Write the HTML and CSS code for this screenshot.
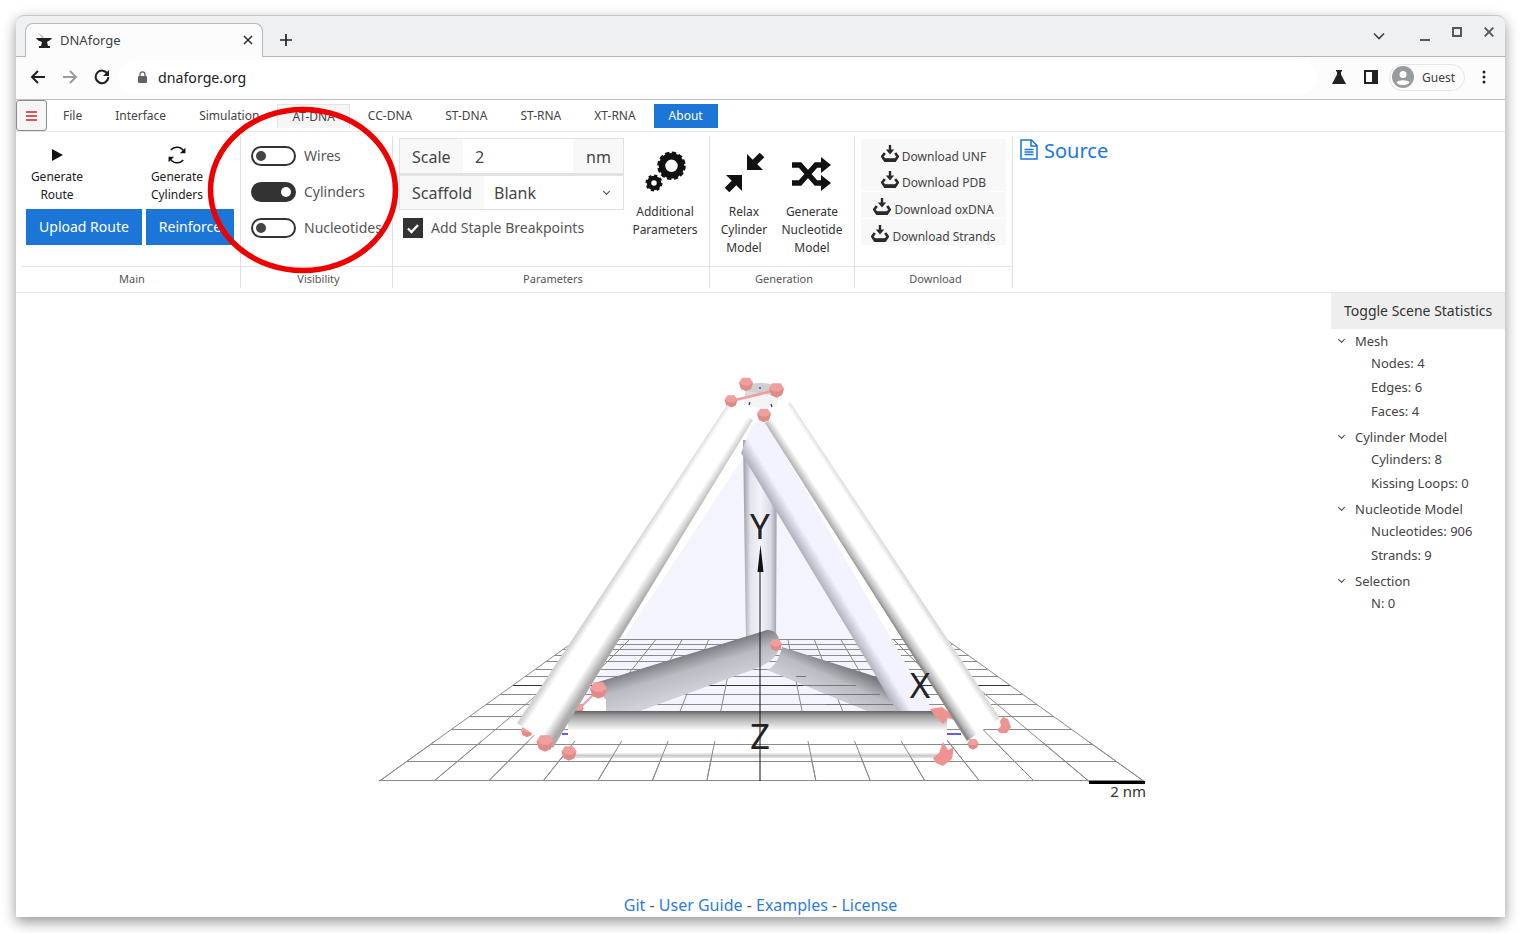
FILE: index.html
```html
<!DOCTYPE html>
<html lang="en">
<head>
<meta charset="utf-8">
<title>DNAforge</title>
<link rel="stylesheet" href="styles.css">
</head>
<body>
<svg class="sprites" width="0" height="0" aria-hidden="true">
  <defs>
    <symbol id="dl" viewBox="0 0 18 18">
      <path d="M7.800 0h2.400v4.500h3L9 9.500 4.800 4.500h3z" fill="#2a2a2a"/>
      <path d="M3.800 8 1.300 11.500 4 15.700h10L16.700 11.500 14.200 8" fill="none" stroke="#2a2a2a" stroke-width="2.600"/>
      <path d="M3 14.500h12" stroke="#2a2a2a" stroke-width="2.600"/>
    </symbol>
  </defs>
</svg>
<div class="window">
  <div class="tabstrip">
    <div class="tab">
      <svg class="favicon" viewBox="0 0 16 16" width="16" height="16">
        <path d="M1 0l7 5-1 2z" fill="#c4c7cb"/>
        <path d="M0 6h16c-2 3-4 3-5 4l1 4h2v2H3v-2h2l1-4C3 9 1 8 0 6z" fill="#222"/>
      </svg>
      <span class="tab-title">DNAforge</span>
      <svg class="tab-x" viewBox="0 0 10 10" width="10" height="10"><path d="M1 1l8 8M9 1l-8 8" stroke="#333" stroke-width="1.600"/></svg>
    </div>
    <svg class="newtab" viewBox="0 0 12 12" width="12" height="12"><path d="M6 0v12M0 6h12" stroke="#222" stroke-width="1.700"/></svg>
    <div class="winctl">
      <svg viewBox="0 0 12 8" width="12" height="8"><path d="M1 1.500l5 5 5-5" fill="none" stroke="#3c4043" stroke-width="1.600"/></svg>
      <svg class="ctl-min" viewBox="0 0 10 2" width="10" height="2"><path d="M0 1h10" stroke="#55585d" stroke-width="2"/></svg>
      <svg class="ctl-max" viewBox="0 0 10 10" width="10" height="10"><rect x="1" y="1" width="8" height="8" fill="none" stroke="#55585d" stroke-width="2"/></svg>
      <svg class="ctl-x" viewBox="0 0 10 10" width="10" height="10"><path d="M.7.7l8.600 8.600M9.300.7.7 9.300" stroke="#55585d" stroke-width="1.900"/></svg>
    </div>
  </div>
  <div class="toolbar">
    <svg class="nav" viewBox="0 0 16 16" width="16" height="16"><path d="M15 8H2M8 2 2 8l6 6" fill="none" stroke="#202124" stroke-width="2"/></svg>
    <svg class="nav" viewBox="0 0 16 16" width="16" height="16"><path d="M1 8h13M8 2l6 6-6 6" fill="none" stroke="#9a9b9d" stroke-width="2"/></svg>
    <svg class="nav" viewBox="0 0 16 16" width="16" height="16"><path d="M13.600 5A6.300 6.300 0 1 0 14.300 8" fill="none" stroke="#202124" stroke-width="2"/><path d="M15 1v6H9z" fill="#202124"/></svg>
    <div class="omnibox">
      <svg viewBox="0 0 9 12" width="9" height="12"><path d="M2 5V3.300a2.500 2.500 0 0 1 5 0V5" fill="none" stroke="#5f6368" stroke-width="1.300"/><rect y="5" width="9" height="7" rx="1" fill="#5f6368"/></svg>
      <span class="url">dnaforge.org</span>
    </div>
    <svg class="flask" viewBox="0 0 14 14" width="14" height="14"><path d="M4 0h6v1.500H9v3L14 14H0L5 4.500v-3H4z" fill="#202124"/></svg>
    <svg class="sidepanel" viewBox="0 0 14 14" width="14" height="14"><path d="M0 0h14v14H0zM2 2v10h6V2z" fill="#202124" fill-rule="evenodd"/></svg>
    <div class="profile">
      <svg viewBox="0 0 22 22" width="22" height="22"><circle cx="11" cy="11" r="11" fill="#9a9b9d"/><circle cx="11" cy="8.500" r="3.500" fill="#fff"/><path d="M4.500 16.500c1.500-3 11.500-3 13 0-3 3.500-10 3.500-13 0z" fill="#fff"/></svg>
      <span>Guest</span>
    </div>
    <svg class="kebab" viewBox="0 0 4 14" width="4" height="14"><circle cx="2" cy="2" r="1.500" fill="#202124"/><circle cx="2" cy="7" r="1.500" fill="#202124"/><circle cx="2" cy="12" r="1.500" fill="#202124"/></svg>
  </div>
  <nav class="menubar">
    <button class="burger" type="button" aria-label="Menu"><span></span><span></span><span></span></button>
    <span class="menu-item">File</span>
    <span class="menu-item">Interface</span>
    <span class="menu-item">Simulation</span>
    <span class="menu-item is-active">AT-DNA</span>
    <span class="menu-item">CC-DNA</span>
    <span class="menu-item">ST-DNA</span>
    <span class="menu-item">ST-RNA</span>
    <span class="menu-item">XT-RNA</span>
    <span class="menu-item is-about">About</span>
  </nav>
  <section class="ribbon">
    <div class="group group-main">
      <div class="group-body main-body">
        <div class="small-tool">
          <svg viewBox="0 0 18 18" width="18" height="18"><path d="M4 3l11 6-11 6z" fill="#111"/></svg>
          <span>Generate Route</span>
        </div>
        <div class="small-tool">
          <svg viewBox="1 1 16 16" width="18" height="18"><path d="M15.400 6.500A7 7 0 0 0 3.500 4.600M2.600 11.500a7 7 0 0 0 11.900 1.900" fill="none" stroke="#111" stroke-width="1.300"/><path d="M16.500 2.500v5H11.500zM1.500 15.500v-5H6.500z" fill="#111"/></svg>
          <span>Generate Cylinders</span>
        </div>
        <button class="primary" type="button">Upload Route</button>
        <button class="primary" type="button">Reinforce</button>
      </div>
      <div class="group-label">Main</div>
    </div>
    <div class="group group-vis">
      <div class="group-body vis-body">
        <div class="switch-row"><span class="switch"></span><span class="switch-text">Wires</span></div>
        <div class="switch-row"><span class="switch is-on"></span><span class="switch-text">Cylinders</span></div>
        <div class="switch-row"><span class="switch"></span><span class="switch-text">Nucleotides</span></div>
      </div>
      <div class="group-label">Visibility</div>
    </div>
    <div class="group group-params">
      <div class="group-body params-body">
        <div class="params-form">
          <div class="field">
            <span class="addon addon-scale">Scale</span>
            <span class="field-value">2</span>
            <span class="addon addon-unit">nm</span>
          </div>
          <div class="field field-second">
            <span class="addon addon-scaffold">Scaffold</span>
            <span class="field-value">Blank</span>
            <span class="chev field-chev"></span>
          </div>
          <div class="check-row">
            <svg viewBox="0 0 20 20" width="20" height="20"><rect width="20" height="20" fill="#333"/><path d="M5 10.500l3.500 3.500L15 7" fill="none" stroke="#fff" stroke-width="2.400"/></svg>
            <span class="check-text">Add Staple Breakpoints</span>
          </div>
        </div>
        <div class="tool tool-add">
          <svg viewBox="641 148 48 48" width="48" height="48">
            <circle cx="671.500" cy="165.800" r="9.500" fill="none" stroke="#111" stroke-width="6.500"/>
            <circle cx="671.500" cy="165.800" r="12.500" fill="none" stroke="#111" stroke-width="3.500" stroke-dasharray="4.200 2.340"/>
            <circle cx="654" cy="183" r="5" fill="none" stroke="#111" stroke-width="4.500"/>
            <circle cx="654" cy="183" r="7.300" fill="none" stroke="#111" stroke-width="2.500" stroke-dasharray="3 2.730"/>
          </svg>
          <span>Additional Parameters</span>
        </div>
      </div>
      <div class="group-label">Parameters</div>
    </div>
    <div class="group group-gen">
      <div class="group-body gen-body">
        <div class="tool">
          <svg viewBox="720 148 48 48" width="48" height="48">
            <path d="M747 154v16h16z" fill="#111"/><path d="M752 165l10-10" stroke="#111" stroke-width="6.500"/>
            <path d="M742 175h-16l16 16z" fill="#111"/><path d="M736 181l-9 9" stroke="#111" stroke-width="6.500"/>
          </svg>
          <span>Relax Cylinder Model</span>
        </div>
        <div class="tool">
          <svg viewBox="788 148 48 48" width="48" height="48">
            <path d="M792 165h8l16 18h8M792 183h8l16-18h8" fill="none" stroke="#111" stroke-width="5.500"/>
            <path d="M821 157l10 8-10 8zM821 175l10 8-10 8z" fill="#111"/>
          </svg>
          <span>Generate Nucleotide Model</span>
        </div>
      </div>
      <div class="group-label">Generation</div>
    </div>
    <div class="group group-dl">
      <div class="group-body dl-body">
        <div class="dl-block">
          <div class="dl-item"><svg width="18" height="18"><use href="#dl"/></svg><span>Download UNF</span></div>
          <div class="dl-item"><svg width="18" height="18"><use href="#dl"/></svg><span>Download PDB</span></div>
        </div>
        <div class="dl-block">
          <div class="dl-item"><svg width="18" height="18"><use href="#dl"/></svg><span>Download oxDNA</span></div>
        </div>
        <div class="dl-block">
          <div class="dl-item"><svg width="18" height="18"><use href="#dl"/></svg><span>Download Strands</span></div>
        </div>
      </div>
      <div class="group-label">Download</div>
    </div>
    <a class="source" href="#">
      <svg viewBox="0 0 18 21" width="18" height="21"><path d="M1 1h10.500L17 6.500V20H1zM11 1.500V7h5.500" fill="none" stroke="#1c76d8" stroke-width="1.500"/><path d="M4.500 10.500h9M4.500 13h9M4.500 15.500h9" stroke="#1c76d8" stroke-width="1.300"/></svg>
      <span>Source</span>
    </a>
  </section>
  <main class="stage">
    <svg class="scene" viewBox="16 293 1489 624" width="1489" height="624">
      <defs>
        <linearGradient id="gFL" gradientUnits="userSpaceOnUse" x1="622" y1="564" x2="653" y2="584"><stop offset="0" stop-color="#d2d2d2"/><stop offset=".18" stop-color="#fff"/><stop offset=".7" stop-color="#fff"/><stop offset="1" stop-color="#ababab"/></linearGradient>
        <linearGradient id="gFR" gradientUnits="userSpaceOnUse" x1="865" y1="581" x2="895" y2="561.400"><stop offset="0" stop-color="#8a8a8a"/><stop offset=".07" stop-color="#b4b4b4"/><stop offset=".3" stop-color="#fff"/><stop offset=".86" stop-color="#fff"/><stop offset="1" stop-color="#dcdcdc"/></linearGradient>
        <linearGradient id="gBR" gradientUnits="userSpaceOnUse" x1="820" y1="583.600" x2="847" y2="567.400"><stop offset="0" stop-color="#b0b0be"/><stop offset=".42" stop-color="#f3f3ff"/><stop offset="1" stop-color="#f3f3ff"/></linearGradient>
        <linearGradient id="gV" gradientUnits="userSpaceOnUse" x1="744" y1="0" x2="777" y2="0"><stop offset="0" stop-color="#a4a4b0"/><stop offset=".2" stop-color="#e4e4ee"/><stop offset=".5" stop-color="#f3f3fc"/><stop offset=".8" stop-color="#dcdce6"/><stop offset="1" stop-color="#9c9ca8"/></linearGradient>
        <linearGradient id="gGL" gradientUnits="userSpaceOnUse" x1="680" y1="655" x2="691" y2="692"><stop offset="0" stop-color="#77777d"/><stop offset=".45" stop-color="#bbbbc3"/><stop offset="1" stop-color="#cfd0d8"/></linearGradient>
        <linearGradient id="gGR" gradientUnits="userSpaceOnUse" x1="833" y1="660" x2="818" y2="694"><stop offset="0" stop-color="#77777d"/><stop offset=".45" stop-color="#bbbbc3"/><stop offset="1" stop-color="#cfd0d8"/></linearGradient>
        <linearGradient id="gH" gradientUnits="userSpaceOnUse" x1="0" y1="711" x2="0" y2="758"><stop offset="0" stop-color="#626264"/><stop offset=".1" stop-color="#a0a0a0"/><stop offset=".42" stop-color="#fff"/><stop offset=".88" stop-color="#fff"/><stop offset=".95" stop-color="#c8c8c8"/><stop offset="1" stop-color="#e6e6e6"/></linearGradient>
        <clipPath id="frontClip"><rect x="370" y="741" width="800" height="45"/></clipPath>
        <g id="floor" fill="none" stroke="#8a8a8a" stroke-width="1">
          <path d="M379.500 780.500H1143.500M406.800 761.500H1116.200M430.500 744.500H1092.500M451 729.500H1072M469.300 716.500H1053.700M485.600 704.500H1037.400M500.100 694.500H1022.900M525 676.500H998M535.600 669.500H987.400M545.500 661.500H977.500M554.500 655.500H968.500M562.800 649.500H960.200M570.300 644.500H952.700M577.500 639.500H945.500"/>
          <path d="M513 685.500H1010" stroke="#333"/>
          <path d="M379.500 781 577.500 639M434 781 603.800 639M488.600 781 630 639M543.100 781 656.300 639M597.700 781 682.600 639M652.200 781 708.900 639M706.800 781 735.200 639M815.900 781 787.800 639M870.400 781 814.100 639M925 781 840.400 639M979.500 781 866.700 639M1034 781 893 639M1088.600 781 919.200 639M1143.500 781 945.500 639"/>
        </g>
        <g id="node">
          <polygon points="-1,-.2 -.55,-.9 .55,-.9 1,-.2 .7,.7 0,1 -.7,.7" fill="#f19e9e"/>
          <polygon points="-1,-.2 -.7,.7 0,1 .7,.7 1,-.2 .4,.2 -.4,.2" fill="#e08a8a"/>
        </g>
      </defs>

      <polygon points="755,440 575,712 940,712" fill="#f3f4fe"/>
      <use href="#floor"/>
      <polygon points="743,440 777,440 776,640 746,640" fill="url(#gV)"/>
      <path d="M595 683 767 630Q780 630 780 647Q776 660 760 667L640 711H606V700Z" fill="url(#gGL)"/>
      <path d="M782 647 877 677 897 711H867L767 670Q778 665 782 647Z" fill="url(#gGR)"/>
      <path d="M803 685.500H856M796 676.500H806M815 694.500H880M825 704.500H898" stroke="#777" fill="none"/>
      <polygon points="741,453 752,425 765,420 933,711 897,711" fill="url(#gBR)"/>
      <polygon points="593,694 606,700 606,711 578,711" fill="#fff"/>
      <path d="M598 690 576 712" stroke="#f0a0a0" stroke-width="2"/>
      <use href="#node" transform="translate(598.500 690) scale(8.500)"/>
      <use href="#node" transform="translate(578 709) scale(5.500)"/>
      <use href="#node" transform="translate(776 645) scale(6)"/>

      <rect x="745" y="387" width="33" height="15" fill="#dcdcdc"/>
      <ellipse cx="761" cy="388" rx="16.500" ry="5" fill="#cfcfcf"/>
      <ellipse cx="761" cy="401" rx="17" ry="7" fill="#f4f4f4"/>
      <path d="M731 401 777 390" stroke="#f09d9d" stroke-width="2.500"/>
      <path d="M760 389v-2M749 405l1-3M771 404l1 3" stroke="#2222dd" stroke-width="1.200"/>
      <use href="#node" transform="translate(746 384) scale(7)"/>
      <use href="#node" transform="translate(776.500 390) scale(7.500)"/>
      <use href="#node" transform="translate(731 401) scale(6.500)"/>

      <rect x="568" y="711" width="379" height="47" fill="url(#gH)"/>
      <use href="#floor" clip-path="url(#frontClip)"/>
      <path d="M562 734h6M947 734h14" stroke="#2b2bee" stroke-width="1.300"/>
      <path d="M930 709l12-2 8 6 7 8-9-3-5 6-8-8z" fill="#ee9292"/>
      <path d="M933 758l6-5 4-11 5 8 6-3-2 12-9 7-7-3z" fill="#ee9292"/>
      <use href="#node" transform="translate(569 753) scale(7.500)"/>
      <use href="#node" transform="translate(527 731) scale(6)"/>
      <use href="#node" transform="translate(973 744) scale(5.500)"/>
      <path d="M1003 717l5 2 3 8-4 6-7 0-3-3 4-4-1-5z" fill="#ee9292"/>

      <polygon points="765,423 790,402 1000,718 967,741" fill="url(#gFR)"/>
      <polygon points="727,405 753,420 553,748 517,723" fill="url(#gFL)"/>
      <use href="#node" transform="translate(545 743) scale(8.500)"/>
      <use href="#node" transform="translate(764 415) scale(7)"/>

      <path d="M760 570V781" stroke="#111" stroke-width="1"/>
      <path d="M760.500 545 757.500 572H763.500Z" fill="#111"/>
      <text class="axis" x="760" y="539">Y</text>
      <text class="axis" x="920" y="698">X</text>
      <text class="axis" x="760" y="749">Z</text>
      <path d="M1089 782.500H1145" stroke="#000" stroke-width="3"/>
      <text class="scale-text" x="1146" y="797">2 nm</text>
    </svg>
    <aside class="stats">
      <div class="stats-toggle">Toggle Scene Statistics</div>
      <ul class="tree">
        <li class="tree-head"><span class="chev"></span>Mesh</li>
        <li class="tree-leaf first">Nodes: 4</li>
        <li class="tree-leaf">Edges: 6</li>
        <li class="tree-leaf">Faces: 4</li>
        <li class="tree-head"><span class="chev"></span>Cylinder Model</li>
        <li class="tree-leaf first">Cylinders: 8</li>
        <li class="tree-leaf">Kissing Loops: 0</li>
        <li class="tree-head"><span class="chev"></span>Nucleotide Model</li>
        <li class="tree-leaf first">Nucleotides: 906</li>
        <li class="tree-leaf">Strands: 9</li>
        <li class="tree-head"><span class="chev"></span>Selection</li>
        <li class="tree-leaf first">N: 0</li>
      </ul>
    </aside>
    <footer class="links"><a href="#">Git</a> - <a href="#">User Guide</a> - <a href="#">Examples</a> - <a href="#">License</a></footer>
  </main>
  <svg class="callout" viewBox="0 0 200 176" width="200" height="176"><ellipse cx="98" cy="88" rx="92.500" ry="80.500" fill="none" stroke="#ee0000" stroke-width="5.500"/></svg>
</div>
</body>
</html>
```
FILE: styles.css
```css
* { box-sizing: border-box; }
html, body { margin: 0; height: 100%; }
body {
  background: #fff;
  overflow: hidden;
  font-family: "Noto Sans", "Open Sans", sans-serif;
  color: #333;
}
.sprites { display: block; height: 0; }
.window {
  position: relative;
  display: flex;
  flex-direction: column;
  width: 1489px;
  height: 902px;
  margin: 15px 0 0 16px;
  border-radius: 8px 8px 0 0;
  background: #fff;
  box-shadow: 0 5px 14px rgba(0, 0, 0, .42);
}

/* browser chrome */
.tabstrip {
  display: flex;
  align-items: flex-end;
  height: 42px;
  flex: none;
  padding-left: 9px;
  background: #eff0f2;
  border: 1px solid #c6c7c9;
  border-bottom-color: #b4b5b7;
  border-width: 1px 0 1px 0;
  border-radius: 8px 8px 0 0;
}
.tab {
  display: flex;
  align-items: center;
  width: 238px;
  height: 34px;
  margin-bottom: -1px;
  padding: 0 9px 2px 10px;
  background: #fcfcfc;
  border: 1px solid #b8b9bb;
  border-bottom: 0;
  border-radius: 8px 8px 0 0;
}
.tab-title { margin-left: 8px; font-size: 13px; color: #3c4043; flex: 1; }
.newtab { margin: 0 0 10px 17px; }
.winctl {
  display: flex;
  align-items: center;
  margin-left: auto;
  height: 100%;
  padding-right: 11px;
}
.ctl-min { margin: 8px 0 0 35px; }
.ctl-max { margin: -8px 0 0 22px; }
.ctl-x { margin: -8px 0 0 22px; }
.toolbar {
  display: flex;
  align-items: center;
  flex: none;
  height: 43px;
  padding: 0 0 2px 14px;
  background: #fcfcfc;
  border-bottom: 1px solid #bfc0c2;
}
.nav { margin-right: 16px; }
.omnibox {
  display: flex;
  align-items: center;
  width: 1199px;
  height: 34px;
  margin-left: -8px;
  padding-left: 14px;
  background: #fff;
  border-radius: 17px;
}
.omnibox svg { margin-left: 6px; }
.url { margin-left: 11px; font-size: 14.2px; color: #202124; }
.flask { margin-left: 15px; }
.sidepanel { margin-left: 18px; }
.profile {
  display: flex;
  align-items: center;
  width: 76px;
  height: 27px;
  margin-left: 11px;
  padding-left: 2px;
  border: 1px solid #e4e5e7;
  border-radius: 14px;
  font-size: 12px;
  color: #3c4043;
}
.profile span { margin-left: 8px; }
.kebab { margin-left: 17px; }

/* menu */
.menubar {
  display: flex;
  align-items: center;
  flex: none;
  height: 32px;
  font-size: 12px;
  border-bottom: 1px solid #e4e4e4;
}
.burger {
  display: flex;
  flex-direction: column;
  justify-content: center;
  gap: 2px;
  width: 31px;
  height: 31px;
  padding: 0 9px;
  background: #f6f6f6;
  border: 1px solid #8a8a8a;
  border-radius: 3px;
}
.burger span { display: block; flex: none; width: 100%; height: 2px; background: #e25555; }
.menu-item {
  display: flex;
  align-items: center;
  height: 24px;
  padding: 0 16px;
  margin-right: 1px;
  color: #444;
}
.menu-item.is-active {
  padding: 0 14px;
  margin-left: 1px;
  margin-right: 2px;
  background: #f5f5f5;
  border: 1px solid #e4e4e4;
  border-bottom: 0;
}
.menu-item.is-about {
  width: 64px;
  justify-content: center;
  padding: 0;
  margin-left: 1px;
  background: #1c76d8;
  color: #fff;
}

/* ribbon */
.ribbon {
  display: flex;
  flex: none;
  height: 161px;
  padding: 4px 0 4px 6px;
  border-bottom: 1px solid #e4e4e4;
}
.group {
  display: flex;
  flex-direction: column;
  border-right: 1px solid #e0e0e0;
}
.group-body { flex: 1; height: 130px; }
.group-label {
  flex: none;
  height: 22px;
  padding-left: 4px;
  border-top: 1px solid #e4e4e4;
  font-size: 11px;
  line-height: 24px;
  text-align: center;
  color: #555;
}
.group-main { width: 219px; }
.group-main .group-label { padding-left: 2px; }
.group-vis { width: 152px; }
.group-params { width: 317px; }
.group-gen { width: 145px; }
.group-dl { width: 158px; }

.main-body {
  display: grid;
  grid-template-columns: 116px 88px;
  grid-template-rows: 58px 36px;
  column-gap: 4px;
  row-gap: 5px;
  align-content: start;
  padding: 10px 0 0 4px;
}
.small-tool {
  display: flex;
  flex-direction: column;
  align-items: center;
  width: 62px;
  font-size: 12px;
  line-height: 18px;
  text-align: center;
  color: #222;
}
.small-tool svg { flex: none; margin-bottom: 4px; }
.primary {
  border: 0;
  padding: 0 0 2px;
  background: #1c76d8;
  color: #fff;
  font: 14px "Noto Sans", sans-serif;
}
.vis-body {
  display: flex;
  flex-direction: column;
  gap: 16px;
  padding: 10px 0 0 10px;
}
.switch-row {
  display: flex;
  align-items: center;
  gap: 8px;
  height: 20px;
  font-size: 14px;
  color: #555;
}
.switch-text { margin-top: -2px; }
.switch {
  position: relative;
  width: 45px;
  height: 20px;
  border: 2px solid #333;
  border-radius: 10px;
  background: #fff;
}
.switch::after {
  content: "";
  position: absolute;
  top: 3px;
  left: 3px;
  width: 10px;
  height: 10px;
  border-radius: 50%;
  background: #444;
}
.switch.is-on { background: #333; }
.switch.is-on::after { left: auto; right: 3px; background: #fff; }

.params-body { display: flex; padding: 2px 0 0 6px; }
.params-form { width: 225px; flex: none; }
.field {
  display: flex;
  align-items: center;
  height: 36px;
  border: 1px solid #e2e2e2;
  font-size: 16px;
  color: #444;
}
.field-second { border-top-width: 2px; }
.addon {
  display: flex;
  align-items: center;
  height: 100%;
  padding: 2px 12px 0;
  background: #f8f8f8;
}
.field-second .addon { padding-top: 0; }
.addon-scale { width: 63px; }
.addon-scaffold { width: 84px; }
.addon-unit { width: 50px; padding-left: 13px; }
.field-value { flex: 1; padding: 2px 0 0 12px; }
.field-second .field-value { padding: 0 0 0 10px; }
.chev {
  display: inline-block;
  width: 5px;
  height: 5px;
  border-right: 1px solid #444;
  border-bottom: 1px solid #444;
  transform: rotate(45deg);
}
.field-chev { margin: -2px 14px 0 0; }
.check-row {
  display: flex;
  align-items: center;
  gap: 8px;
  margin: 8px 0 0 4px;
  font-size: 14px;
  color: #555;
}
.check-text { margin-top: -2px; }
.tool {
  display: flex;
  flex-direction: column;
  align-items: center;
  width: 68px;
  padding-top: 10px;
  font-size: 12px;
  line-height: 18px;
  text-align: center;
  color: #333;
}
.tool svg { flex: none; margin-bottom: 7px; }
.tool-add { width: 78px; margin-left: 2px; }
.gen-body { display: flex; padding-top: 2px; }
.dl-body {
  display: flex;
  flex-direction: column;
  gap: 1px;
  padding: 3px 0 0 6px;
}
.dl-block { width: 145px; background: #f8f8f8; }
.dl-item {
  display: flex;
  align-items: center;
  justify-content: center;
  gap: 3px;
  height: 26px;
  padding-top: 8px;
  font-size: 12px;
  color: #444;
}
.dl-item svg { margin-top: -4px; }
.source {
  display: flex;
  align-items: center;
  align-self: flex-start;
  gap: 6px;
  margin: 2px 0 0 7px;
  font-size: 20px;
  line-height: 26px;
  color: #1c76d8;
  text-decoration: none;
}
.source svg { margin-top: -4px; }

/* stage */
.stage {
  display: grid;
  flex: 1;
  min-height: 0;
  grid-template: 1fr / 1fr;
}
.stage > * { grid-area: 1 / 1; }
.scene { display: block; }
.axis {
  font-family: "Noto Sans", sans-serif;
  font-size: 35px;
  font-weight: 400;
  text-anchor: middle;
  fill: #222;
}
.scale-text {
  font-family: "Noto Sans", sans-serif;
  font-size: 15px;
  text-anchor: end;
  fill: #333;
}
.stats {
  justify-self: end;
  width: 174px;
  font-size: 13px;
  color: #444;
}
.stats-toggle {
  height: 36px;
  padding-left: 13px;
  background: #eee;
  font-size: 14px;
  line-height: 36px;
  color: #333;
}
.tree { margin: 0; padding: 0; list-style: none; }
.tree-head {
  display: flex;
  align-items: center;
  height: 24px;
  margin-top: 2px;
  padding-left: 8px;
  line-height: 24px;
}
.tree-head .chev { margin: -3px 11px 0 0; }
.tree-head:first-child { margin-top: 0; }
.tree-leaf {
  height: 24px;
  padding-left: 40px;
  line-height: 24px;
}
.tree-leaf.first { margin-top: -2px; }
.links {
  align-self: end;
  justify-self: center;
  font-size: 16px;
  line-height: 24px;
  color: #555;
}
.links a { color: #2b7de0; text-decoration: none; }

/* hand-drawn annotation on top of the page */
.callout {
  position: absolute;
  left: 189px;
  top: 87px;
  pointer-events: none;
}
```
